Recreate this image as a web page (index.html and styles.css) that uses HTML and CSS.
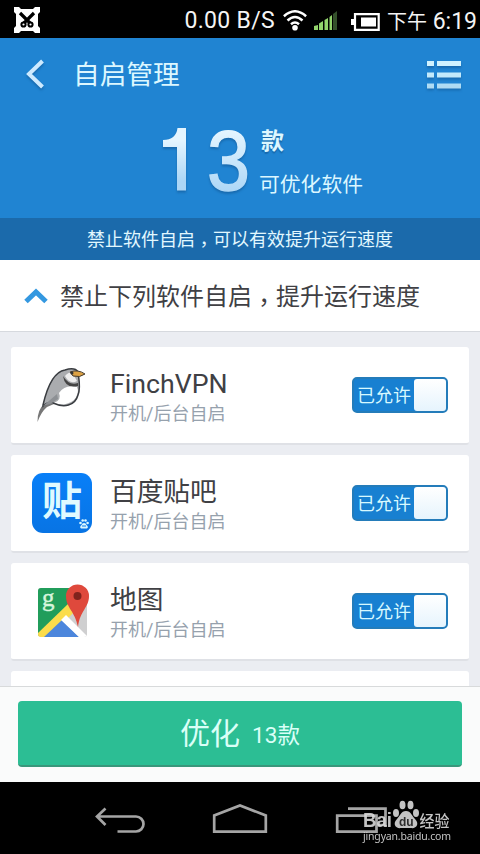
FILE: index.html
```html
<!DOCTYPE html>
<html lang="zh-CN">
<head>
<meta charset="utf-8">
<title>自启管理</title>
<link rel="stylesheet" href="styles.css">
</head>
<body>
<div class="screen">
  <div class="status">
    <svg class="cut" width="26" height="26" viewBox="0 0 26 26"><path d="M0 0H5L7 2H19L21 0H26V5L24 7V19L26 21V26H21L19 24H7L5 26H0V21L2 19V7L0 5Z" fill="#fff"/><path d="M6 6L17 17M20 6L9 17" stroke="#000" stroke-width="3.2"/><circle cx="9.500" cy="17.500" r="2.100" fill="#fff" stroke="#000" stroke-width="2"/><circle cx="16.500" cy="17.500" r="2.100" fill="#fff" stroke="#000" stroke-width="2"/></svg>
    <span class="speed">0.00 B/S</span>
    <svg class="wifi" width="24" height="21" viewBox="0 0 24 21"><g fill="none" stroke="#fff" stroke-width="2.500"><path d="M.9 6.300Q12-3.700 23.100 6.300"/><path d="M4.500 10.500Q12 3.600 19.500 10.500"/><path d="M8 14.300Q12 10.700 16 14.300"/></g><circle cx="12" cy="17.700" r="2.800" fill="#fff"/></svg>
    <svg class="signal" width="23" height="19" viewBox="0 0 23 19"><path d="M0 19V15L4 14V19Z M5 19V12.500L9 10V19Z M10.500 19V9L14 7V19Z M15.500 19V6L18 4V19Z" fill="#92d36c"/><path d="M19 19V3L23 0V19Z" fill="#34502b"/></svg>
    <svg class="battery" width="29" height="18" viewBox="0 0 29 18"><path d="M4 1.200H27.700V16.800H4Z" fill="none" stroke="#fff" stroke-width="2.200"/><rect y="6" width="4" height="6" fill="#fff"/><rect x="10" y="4.500" width="15" height="9" fill="#fff"/></svg>
    <span class="time"><span class="ampm">下午</span> 6:19</span>
  </div>
  <header class="hero">
    <div class="nav">
      <svg class="back" width="22" height="32" viewBox="0 0 22 32"><path d="M19.500 3L6 16L19.500 29" fill="none" stroke="#cdeaff" stroke-width="4"/></svg>
      <h1 class="title">自启管理</h1>
      <svg class="menu" width="35" height="30" viewBox="0 0 35 30"><g fill="#d0f2ff"><path d="M0 1H7V6H0ZM10 1H34V6H10Z"/><path d="M0 12.500H7V17.500H0ZM10 12.500H34V17.500H10Z" opacity=".93"/><path d="M0 23.500H7V28.500H0ZM10 23.500H34V28.500H10Z" opacity=".82"/></g></svg>
    </div>
    <div class="count">
      <svg class="num" width="98" height="94" viewBox="0 0 98 94"><defs><linearGradient id="ice" x1="0" y1="0" x2="0" y2="1"><stop offset="0.200" stop-color="#e4f5ff"/><stop offset="0.850" stop-color="#acd6f6"/></linearGradient></defs><g class="digits" fill="url(#ice)" stroke="url(#ice)"><path d="M4 17Q17 17 18.500 5H27V67.500H18V24H4Z" stroke="none"/><text x="48" y="67" textLength="43" lengthAdjust="spacingAndGlyphs">3</text></g></svg>
      <div class="unit"><span class="kuan">款</span><span class="desc">可优化软件</span></div>
    </div>
    <p class="banner">禁止软件自启<span class="comma">，</span>可以有效提升运行速度</p>
  </header>
  <div class="group">
    <svg width="24" height="16" viewBox="0 0 24 16"><path d="M2 13.500L12 4L22 13.500" fill="none" stroke="#3498e0" stroke-width="5"/></svg>
    <h2>禁止下列软件自启<span class="comma">，</span>提升运行速度</h2>
  </div>
  <main class="list">
    <section class="card">
      <svg class="icon" width="60" height="60" viewBox="0 0 60 60">
        <path d="M13 38Q5 45 5.500 57Q9 47 15 42L22 39Z" fill="#777"/><path d="M11 40C14 27 20 7 33 5Q43 2 46 7C47 15 49 23 46 30C43 41 32 43 21 38Q15 37 11 41Z" fill="#aaacaf"/><path d="M27 28Q33 19 45 22Q48 28 42 35Q33 42 22 38Q30 35 27 28Z" fill="#fff"/><path d="M11 40C14 27 20 7 33 5Q43 2 46 7C47 15 49 23 46 30C43 41 32 43 21 38Q15 37 11 41Z" fill="none" stroke="#393c40" stroke-width="1.500"/><path d="M31 11Q37 21 46 18V21Q33 24 31 11Z" fill="#444"/><path d="M33 11Q38 5 41 9L45 16Q38 20 33 11Z" fill="#eee"/><path d="M38 7Q46 4 53 9Q48 13 41 11Z" fill="#dda244" stroke="#453c30" stroke-width="1"/><circle cx="40" cy="8" r="1.500" fill="#333"/><path d="M11 41L25 29L26 34L18 39" fill="#8d9094"/></svg>
      <div class="info"><h3>FinchVPN</h3><p>开机/后台自启</p></div>
      <div class="toggle"><span>已允许</span><i></i></div>
    </section>
    <section class="card">
      <div class="icon tieba"><span>贴</span><svg width="10" height="10" viewBox="0 0 10 10"><g fill="#d9f6ff"><circle cx="1.500" cy="4" r="1.300"/><circle cx="3.700" cy="1.500" r="1.300"/><circle cx="6.500" cy="1.500" r="1.300"/><circle cx="8.600" cy="4" r="1.300"/><path d="M5 4Q7 4 7.500 6Q10 8 8 9.500H2Q0 8 2.500 6Q3 4 5 4Z"/></g><path d="M4 6V8M6 6V8" stroke="#087be8"/></svg></div>
      <div class="info"><h3>百度贴吧</h3><p>开机/后台自启</p></div>
      <div class="toggle"><span>已允许</span><i></i></div>
    </section>
    <section class="card">
      <svg class="icon" width="60" height="60" viewBox="0 0 60 60"><defs><clipPath id="map"><rect x="6" y="7" width="49" height="49" rx="3"/></clipPath></defs><g clip-path="url(#map)"><path d="M0 0H60V60H0Z" fill="#cfcfd0"/><path d="M6 7H43V22L6 55Z" fill="#219d5b"/><path d="M6 52L36 23L43 30L14 60H6Z" fill="#fbdc4b"/><path d="M12 56L30 39L49 58H12Z" fill="#4c86dc"/><path d="M29 39L34 34L57 57H48Z" fill="#fff"/></g><text class="mapg" x="10" y="25">g</text><path d="M34 15A11.500 11.500 0 0 1 57 15C57 27 48 29 46 46C43 30 34 27 34 15Z" fill="#df493c"/><circle cx="45.500" cy="15" r="4" fill="#80231d"/></svg>
      <div class="info"><h3>地图</h3><p>开机/后台自启</p></div>
      <div class="toggle"><span>已允许</span><i></i></div>
    </section>
    <section class="card"></section>
  </main>
  <div class="action"><button><span class="big">优化</span><span class="small">13款</span></button></div>
  <div class="softkeys">
    <svg width="480" height="72" viewBox="0 0 480 72"><g fill="none" stroke="#a5a5a5" stroke-width="2.700"><path d="M105.500 26.500L97 34.500L105.500 43M98 34.500H136A7.500 7.500 0 0 1 136 49.500H117.500"/><path d="M214.200 49.700V33.500L240 23.500L265.800 33.500V49.700Z"/><path d="M337.200 33.700H376.500V49.700H337.200Z"/><path d="M348 26.700H385.500V43H378"/></g>
      <g class="mark" fill="#d9d9d9"><text class="bai" x="363" y="45" textLength="29" lengthAdjust="spacingAndGlyphs">Bai</text><ellipse cx="396" cy="31" rx="3" ry="4"/><ellipse cx="402.500" cy="23" rx="3" ry="4.300"/><ellipse cx="410.500" cy="23" rx="3" ry="4.300"/><ellipse cx="416" cy="31" rx="3" ry="4"/><path d="M406 29C411 29 412 34 415 37C420 42 416 47 411 46H401C396 47 392 42 397 37C400 34 401 29 406 29Z"/><text class="du" x="399" y="44">du</text><text class="jing" x="419.500" y="45" textLength="30" lengthAdjust="spacingAndGlyphs">经验</text><text class="url" x="363" y="58" textLength="88">jingyan.baidu.com</text></g></svg>
  </div>
</div>
</body>
</html>
```
FILE: styles.css
```css
* { box-sizing: border-box; }
body, h1, h2, h3, p { margin: 0; font-weight: 400; }
body { font-family: Roboto, "Noto Sans CJK SC", sans-serif; background: #000; }
svg { display: block; flex: none; }
.screen { width: 480px; height: 854px; overflow: hidden; display: flex; flex-direction: column; }
.status { height: 38px; flex: none; background: #000; color: #f4f4f4; display: flex; align-items: center; padding: 2px 3px 0 14px; font-size: 23px; white-space: nowrap; }
.speed { margin-left: auto; letter-spacing: .3px; }
.wifi { margin-left: 8px; }
.signal { margin-left: 7px; }
.battery { margin: 3px 0 0 14px; }
.time { margin-left: 7px; }
.ampm { font-size: 20px; }
.hero { height: 222px; flex: none; background: #2084d2; display: flex; flex-direction: column; color: #dcf7ff; }
.nav { height: 72px; display: flex; align-items: center; padding: 0 18px 0 23px; }
.back { filter: drop-shadow(0 2px 1px #1769ad); }
.title { margin: 2px 0 0 28px; font-size: 26.700px; line-height: 36px; }
.menu { margin: 2px 0 0 auto; filter: drop-shadow(0 2px 1px #1769ad); }
.count { height: 108px; display: flex; padding: 13px 0 0 159px; }
.num { filter: drop-shadow(0 2px 1px #1769ad); }
.digits { font: 86px "Liberation Sans", sans-serif; stroke-width: 1.500px; }
.unit { display: flex; flex-direction: column; padding-left: 2px; }
.kuan { font-size: 23px; line-height: 30px; font-weight: 700; margin: 4px 0 0 2px; text-shadow: 0 2px 1px #1769ad; }
.desc { font-size: 20.800px; line-height: 30px; margin-top: 13px; }
.banner { height: 42px; background: #1b6aab; font-size: 18px; line-height: 44px; text-align: center; color: #e2f8ff; }
.comma { display: inline-block; width: 1em; line-height: 1; font-family: "Noto Sans CJK TC", sans-serif; vertical-align: -.25em; }
.group { height: 72px; flex: none; display: flex; align-items: center; padding-left: 24px; background: #fff; border-bottom: 1px solid #d6d9de; color: #404044; }
.group h2 { font-size: 24px; line-height: 36px; margin: 2px 0 0 12px; }
.list { height: 354px; flex: none; overflow: hidden; background: #ebedf2; padding: 15px 11px 0; display: flex; flex-direction: column; gap: 10px; }
.card { height: 98px; flex: none; display: flex; align-items: center; padding: 0 21px; background: #fff; border-radius: 3px; border-bottom: 2px solid #dfe1e6; }
.icon { width: 60px; height: 60px; flex: none; }
.tieba { position: relative; border-radius: 11px; background: linear-gradient(#087ff8, #0874e4); color: #dffaff; font-size: 40px; line-height: 57px; font-weight: 700; text-align: center; }
.tieba svg { position: absolute; right: 3px; bottom: 4px; }
.mapg { font: 25px "Liberation Serif", serif; fill: #d5f5dc; stroke: #d5f5dc; stroke-width: .4px; }
.info { margin-left: 18px; flex: 1; padding-top: 4px; }
.info h3 { font-size: 26.700px; line-height: 34px; color: #404044; }
.info p { font-size: 18px; line-height: 26px; color: #96a1ad; }
.toggle { width: 96px; height: 36px; border: 2px solid #247cba; border-radius: 5px; background: #1880d1; display: flex; align-items: center; justify-content: space-between; color: #d8f9ff; font-size: 18px; padding-left: 3px; }
.toggle span { line-height: 30px; padding-top: 2px; }
.toggle i { width: 32px; height: 32px; border-radius: 3px; background: linear-gradient(#fff, #e6f4fd); }
.action { height: 96px; flex: none; background: #fafbfb; border-top: 1px solid #d8dadb; padding: 14px 18px; }
.action button { width: 100%; height: 66px; border: 0; border-bottom: 2px solid #39977b; border-radius: 4px; background: #2cbe94; color: #dafff7; font-family: inherit; display: flex; align-items: center; justify-content: center; gap: 12px; padding: 0; }
.big { font-size: 30px; line-height: 44px; padding-top: 1px; }
.small { font-size: 22.500px; line-height: 32px; padding-top: 3px; }
.softkeys { height: 72px; flex: none; }
.mark { opacity: .9; }
.bai { font: 700 21px "Liberation Sans", sans-serif; }
.du { font: 700 12px "Liberation Sans", sans-serif; fill: #333; }
.jing { font: 500 15.500px "Noto Sans CJK SC", sans-serif; }
.url { font: 10.500px "Noto Sans", sans-serif; }
```
